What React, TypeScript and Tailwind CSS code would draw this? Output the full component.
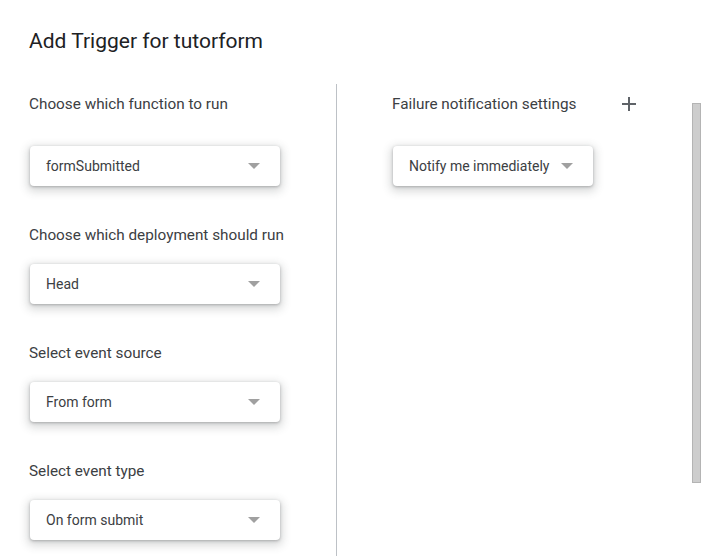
function Select({ value, width }: { value: string; width: string }) {
  return (
    <div
      className={`${width} h-10 flex items-center justify-between pl-4 pr-5 bg-white rounded shadow-[0_1px_3px_rgba(60,64,67,0.35),0_3px_8px_3px_rgba(60,64,67,0.18)]`}
    >
      <span className="text-sm text-[#3c4043]">{value}</span>
      <span className="w-0 h-0 border-x-[6px] border-x-transparent border-t-[6px] border-t-[#a0a0a0]" />
    </div>
  );
}

function Field({ label, value, first }: { label: string; value: string; first?: boolean }) {
  return (
    <div className={first ? "" : "mt-[39px]"}>
      <div className="h-5 leading-5 text-[15.3px] text-[#3c4043]">{label}</div>
      <div className={first ? "mt-8 ml-px" : "mt-[19px] ml-px"}>
        <Select value={value} width="w-[250px]" />
      </div>
    </div>
  );
}

export default function App() {
  return (
    <div className="relative w-[701px] h-[556px] bg-white overflow-hidden font-['Roboto',sans-serif]">
      <div className="pt-[27px] pl-[29px]">
        <h1 className="h-7 leading-7 text-[21px] text-[#202124]">Add Trigger for tutorform</h1>
      </div>
      <div className="flex mt-[29px] h-[472px]">
        <div className="w-[336px] pl-[29px] pt-[10px] pr-6">
          <Field first label="Choose which function to run" value="formSubmitted" />
          <Field label="Choose which deployment should run" value="Head" />
          <Field label="Select event source" value="From form" />
          <Field label="Select event type" value="On form submit" />
        </div>
        <div className="w-px bg-[#bdc1c6]" />
        <div className="pl-[55px] pt-[10px]">
          <div className="w-[244px] h-5 flex items-center justify-between">
            <span className="leading-5 text-[15.3px] text-[#3c4043]">Failure notification settings</span>
            <svg width="14" height="14" viewBox="0 0 14 14">
              <path d="M7 0v14M0 7h14" stroke="#5f6368" strokeWidth="2" />
            </svg>
          </div>
          <div className="mt-8 ml-px">
            <Select value="Notify me immediately" width="w-[200px]" />
          </div>
        </div>
      </div>
      <div className="absolute right-0 top-[103px] w-[9px] h-[380px] bg-[#cdcdcd] border border-[#b4b4b4]" />
    </div>
  );
}
